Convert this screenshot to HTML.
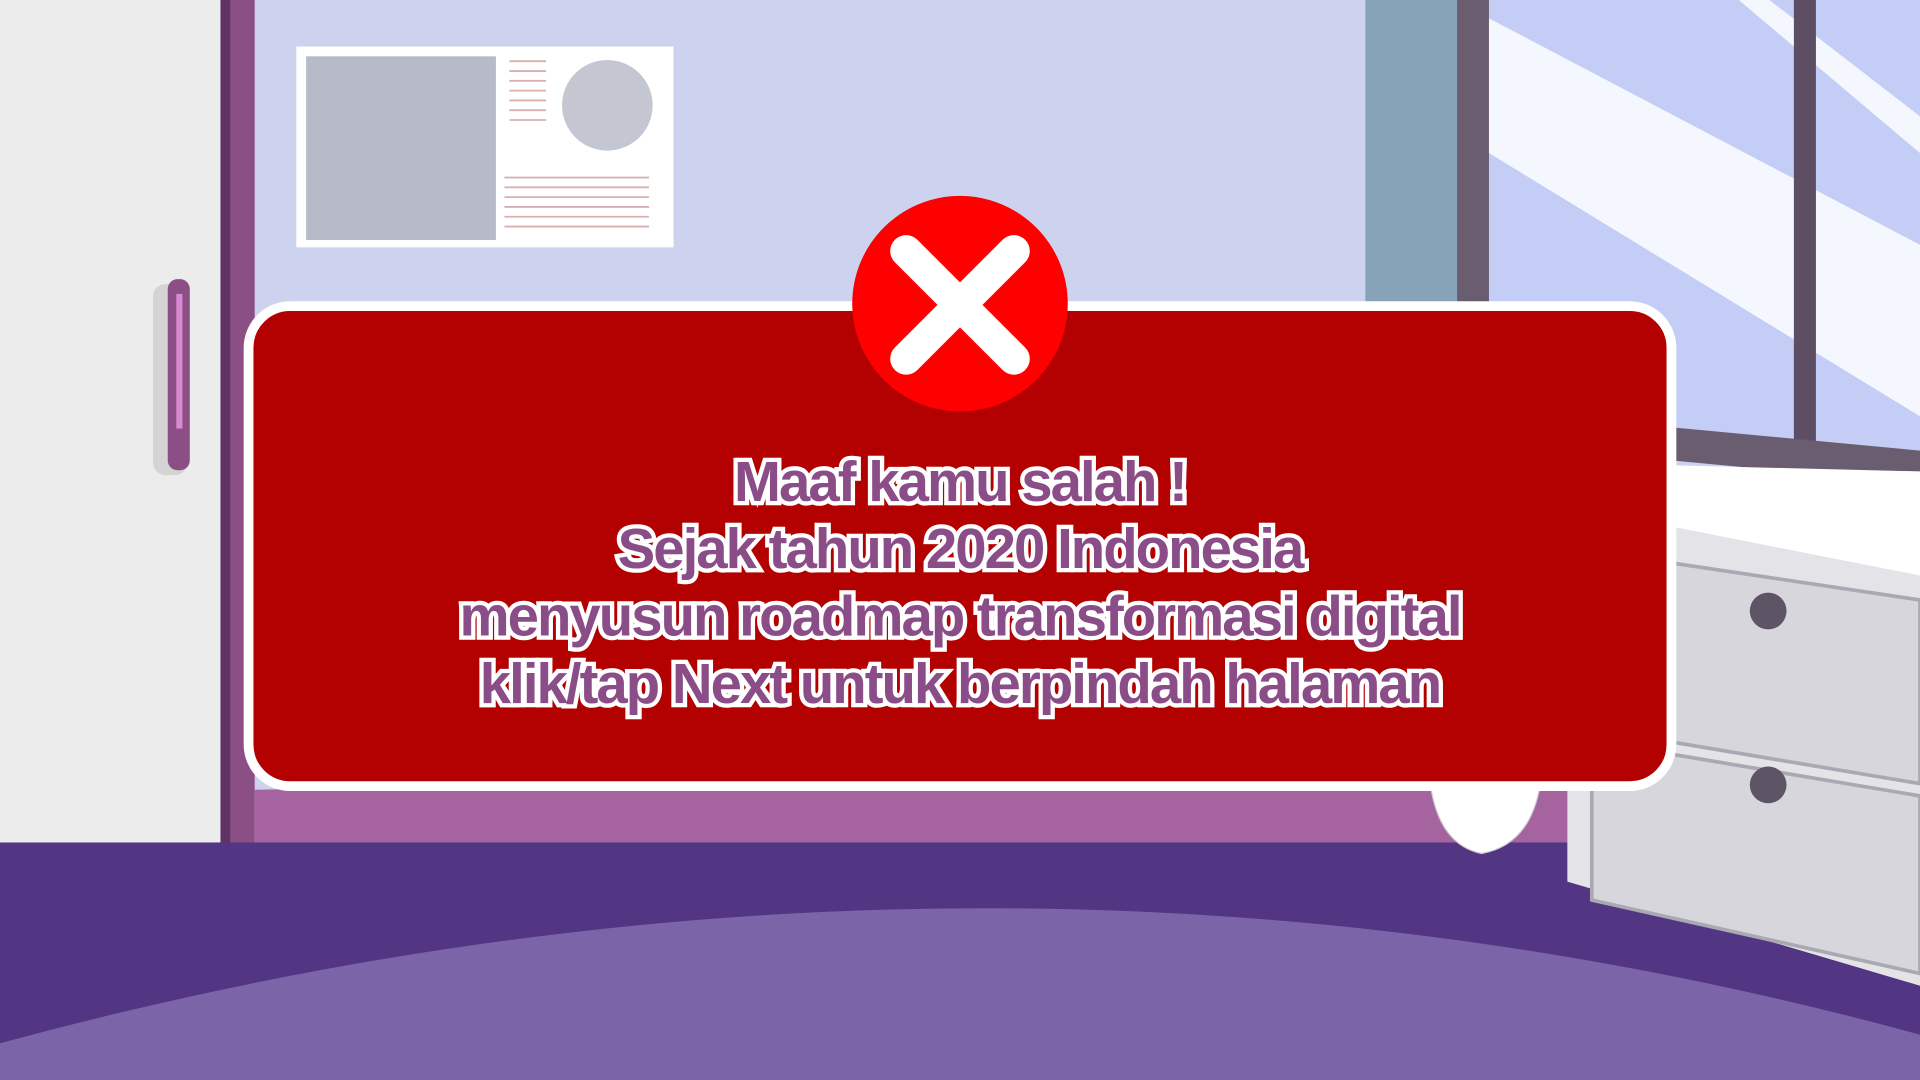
<!DOCTYPE html>
<html><head><meta charset="utf-8"><style>
html,body{margin:0;padding:0;width:1920px;height:1080px;overflow:hidden;background:#cdd3ef}
#s{position:absolute;left:0;top:0;width:1568px;height:882px;transform:scale(1.22449);transform-origin:0 0;overflow:hidden}
.a{position:absolute}
.t{position:absolute;left:203px;width:1162px;text-align:center;font-family:"Liberation Sans",sans-serif;font-weight:bold;font-size:46px;letter-spacing:-1.6px;color:#8a4d87;-webkit-text-stroke:7px #fff;paint-order:stroke fill;line-height:55px}
</style></head><body><div id="s">
<svg class="a" style="left:0;top:0" width="1568" height="882">
<rect width="1568" height="882" fill="#cdd3ef"/>
<rect x="1115" y="0" width="76" height="260" fill="#87a3b8"/>
<rect x="1190" y="0" width="26" height="360" fill="#6b5d70"/>
<polygon points="1216,0 1568,0 1568,372 1216,340" fill="#c3cdf6"/>
<polygon points="1216,15 1216,125 1568,340 1568,200" fill="#f4f8fe"/>
<polygon points="1420,0 1445,0 1568,95 1568,125" fill="#f4f8fe"/>
<rect x="1465" y="0" width="18" height="365" fill="#5d4e64"/>
<polygon points="1216,335 1568,368 1568,395 1216,362" fill="#6b5d70"/>
<rect x="242" y="38" width="308" height="164" fill="#fff"/>
<rect x="250" y="46" width="155" height="150" fill="#b7bbc7"/>
<circle cx="496" cy="86" r="37" fill="#c4c6d2"/>
<g stroke="#d9b0b0" stroke-width="1.5">
<line x1="416" y1="50" x2="446" y2="50"/><line x1="416" y1="58" x2="446" y2="58"/><line x1="416" y1="66" x2="446" y2="66"/><line x1="416" y1="74" x2="446" y2="74"/><line x1="416" y1="82" x2="446" y2="82"/><line x1="416" y1="90" x2="446" y2="90"/><line x1="416" y1="98" x2="446" y2="98"/>
<line x1="412" y1="145" x2="530" y2="145"/><line x1="412" y1="153" x2="530" y2="153"/><line x1="412" y1="161" x2="530" y2="161"/><line x1="412" y1="169" x2="530" y2="169"/><line x1="412" y1="177" x2="530" y2="177"/><line x1="412" y1="185" x2="530" y2="185"/></g>
<rect x="180" y="0" width="28" height="690" fill="#8b4f85"/>
<rect x="180" y="0" width="8" height="690" fill="#5f3463"/>
<rect x="0" y="0" width="180" height="692" fill="#ececec"/>
<rect x="125" y="232" width="28" height="156" rx="10" fill="#d4d4d4"/>
<rect x="137" y="228" width="18" height="156" rx="8" fill="#8b4f85"/>
<rect x="144" y="240" width="5" height="110" fill="#d98ad2"/>
<polygon points="208,645 1568,620 1568,700 208,700" fill="#a563a0"/>
<rect x="0" y="688" width="1568" height="194" fill="#533683"/>
<path d="M0,852 Q800,635 1568,845 L1568,882 L0,882 Z" fill="#7b65a8"/>
<polygon points="1280,395 1568,395 1568,805 1280,720" fill="#e3e3e8"/>
<polygon points="1365,380 1568,385 1568,470 1365,430" fill="#fff"/>
<polygon points="1300,450 1568,490 1568,640 1300,595" fill="#d6d6dc" stroke="#a9a9b3" stroke-width="3"/>
<polygon points="1300,605 1568,650 1568,795 1300,735" fill="#d6d6dc" stroke="#a9a9b3" stroke-width="3"/>
<circle cx="1444" cy="499" r="15" fill="#5d5566"/><circle cx="1444" cy="641" r="15" fill="#5d5566"/>
<path d="M1168,640 Q1175,690 1210,697 Q1250,690 1258,640 Z" fill="#fff" stroke="#ccc"/>
<rect x="203" y="250" width="1162" height="392" rx="34" fill="#b30000" stroke="#fff" stroke-width="8"/>
<circle cx="784" cy="248" r="88" fill="#ff0000"/>
<g stroke="#fff" stroke-width="26" stroke-linecap="round"><line x1="740" y1="205" x2="828" y2="293"/><line x1="828" y1="205" x2="740" y2="293"/></g>
</svg>
<div class="t" style="top:366px">Maaf kamu salah !<br>Sejak tahun 2020 Indonesia<br>menyusun roadmap transformasi digital<br>klik/tap Next untuk berpindah halaman</div>
</div></body></html>
